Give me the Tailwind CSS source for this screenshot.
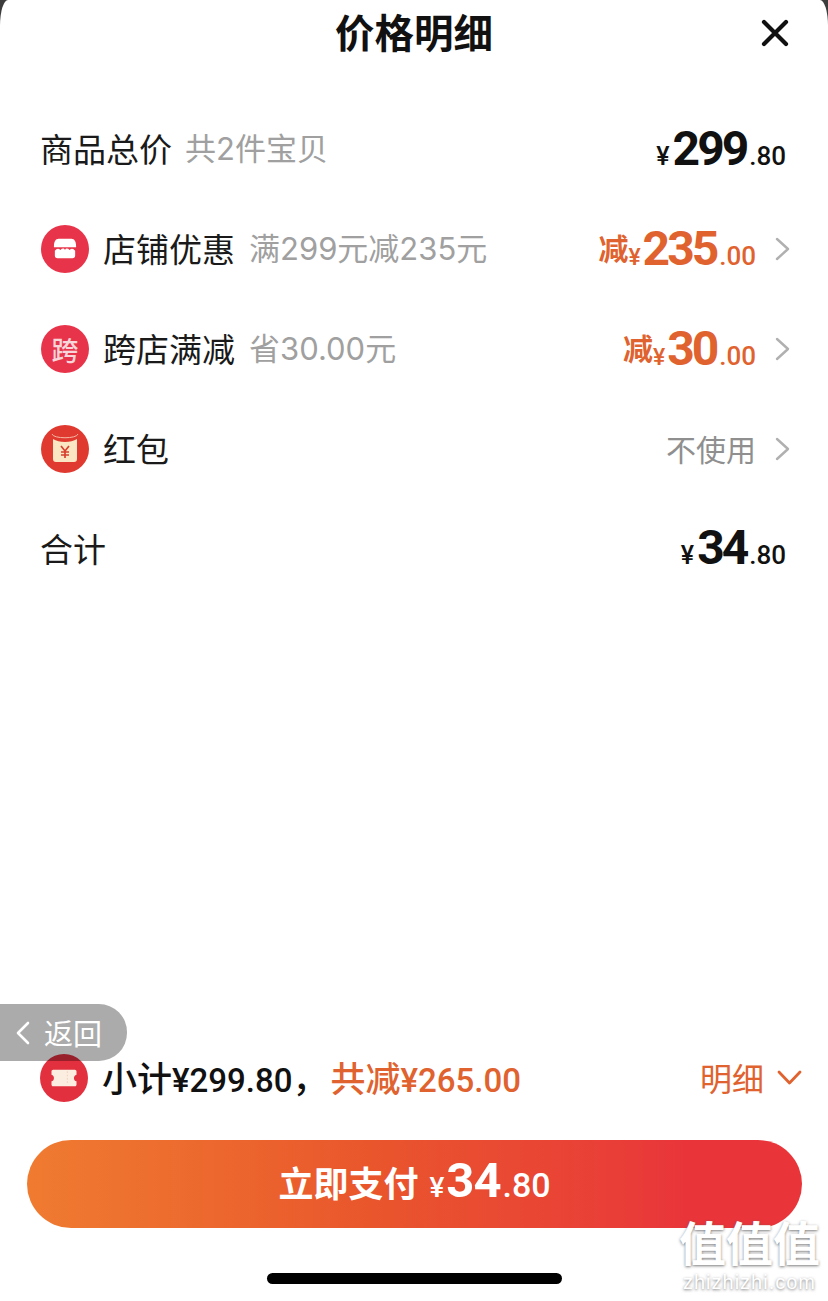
<!DOCTYPE html>
<html lang="zh-CN">
    <head>
        <meta charset="UTF-8" />
        <meta name="viewport" content="width=device-width, initial-scale=1.0" />
        <script src="https://cdn.jsdelivr.net/npm/@tailwindcss/browser@4"></script>
        <title>价格明细</title>
    </head>
    <body class="bg-[#3c3c3c] font-['Noto_Sans_CJK_SC','Noto_Sans',sans-serif] overflow-hidden">
        <div class="relative flex flex-col h-[1301px] bg-white rounded-tl-[8px_26px] rounded-tr-[8px_26px] overflow-hidden">
            <!-- Header -->
            <header class="relative flex justify-center items-center h-[68px] shrink-0">
                <h1 class="text-[39.5px] leading-none font-semibold text-[#111] pb-[6px]">价格明细</h1>
                <svg class="absolute left-[760px] top-[18px] w-[30px] h-[30px]" viewBox="0 0 30 30" fill="none" stroke="#111" stroke-width="4.2" stroke-linecap="round">
                    <path d="M4 4 L26 26 M26 4 L4 26" />
                </svg>
            </header>

            <!-- Price rows -->
            <main class="flex flex-col pt-[31px] flex-1">
                <div class="flex items-center justify-between h-[100px] pl-[40px] pr-[42px]">
                    <div class="flex items-center gap-[13px]">
                        <span class="text-[33px] leading-none text-[#1a1a1a] pb-[2px]">商品总价</span>
                        <span class="font-['Inter','Noto_Sans_CJK_SC',sans-serif] text-[31px] leading-none text-[#a0a0a0] pb-[2px]">共2件宝贝</span>
                    </div>
                    <div class="flex items-baseline mt-[3px] font-['Roboto',sans-serif] text-[#111]">
                        <span class="text-[25px] font-medium mr-[3px]">¥</span>
                        <span class="text-[48px] leading-none font-bold tracking-[-3px]">299</span>
                        <span class="text-[26px] font-medium ml-[3px]">.80</span>
                    </div>
                </div>

                <div class="flex items-center justify-between h-[100px] pl-[41px] pr-[38px]">
                    <div class="flex items-center gap-[14px]">
                        <span class="flex justify-center items-center w-[48px] h-[48px] rounded-full bg-[#e8344a] shrink-0">
                            <svg class="w-[24px] h-[24px]" viewBox="0 0 26 26" fill="#fff">
                                <path d="M6 2 H20 C23 2 25 5 25 10 V11 H1 V10 C1 5 3 2 6 2 Z" />
                                <path d="M2 15 C4 12 6 12 8 14 C10 12 12 12 13 14 C14 12 16 12 18 14 C20 12 22 12 24 15 V20 C24 22 23 23 21 23 H5 C3 23 2 22 2 20 Z" />
                            </svg>
                        </span>
                        <span class="text-[33px] leading-none text-[#1a1a1a] pb-[2px]">店铺优惠</span>
                        <span class="font-['Inter','Noto_Sans_CJK_SC',sans-serif] text-[31px] leading-none text-[#a0a0a0] pb-[2px]">满299元减235元</span>
                    </div>
                    <div class="flex items-center gap-[19px]">
                        <div class="flex items-baseline mt-[2px] font-['Roboto',sans-serif] text-[#e0622f]">
                            <span class="font-['Noto_Sans_CJK_SC',sans-serif] text-[30px] font-semibold -translate-y-[5px]">减</span>
                            <span class="text-[23px] font-medium mr-[2px]">¥</span>
                            <span class="text-[48px] leading-none font-bold tracking-[-3px]">235</span>
                            <span class="text-[26px] font-medium ml-[3px]">.00</span>
                        </div>
                        <svg class="w-[15px] h-[26px]" viewBox="0 0 15 26" fill="none" stroke="#b0b0b0" stroke-width="2.4" stroke-linecap="round" stroke-linejoin="round">
                            <path d="M2 3 L13 13 L2 23" />
                        </svg>
                    </div>
                </div>

                <div class="flex items-center justify-between h-[100px] pl-[41px] pr-[38px]">
                    <div class="flex items-center gap-[14px]">
                        <span class="flex justify-center items-center w-[48px] h-[48px] rounded-full bg-[#e8344a] shrink-0 text-[27px] leading-none font-medium text-[#f8d5d8]">跨</span>
                        <span class="text-[33px] leading-none text-[#1a1a1a] pb-[2px]">跨店满减</span>
                        <span class="font-['Inter','Noto_Sans_CJK_SC',sans-serif] text-[31px] leading-none text-[#a0a0a0] pb-[2px]">省30.00元</span>
                    </div>
                    <div class="flex items-center gap-[19px]">
                        <div class="flex items-baseline mt-[2px] font-['Roboto',sans-serif] text-[#e0622f]">
                            <span class="font-['Noto_Sans_CJK_SC',sans-serif] text-[30px] font-semibold -translate-y-[5px]">减</span>
                            <span class="text-[23px] font-medium mr-[2px]">¥</span>
                            <span class="text-[48px] leading-none font-bold tracking-[-3px]">30</span>
                            <span class="text-[26px] font-medium ml-[3px]">.00</span>
                        </div>
                        <svg class="w-[15px] h-[26px]" viewBox="0 0 15 26" fill="none" stroke="#b0b0b0" stroke-width="2.4" stroke-linecap="round" stroke-linejoin="round">
                            <path d="M2 3 L13 13 L2 23" />
                        </svg>
                    </div>
                </div>

                <div class="flex items-center justify-between h-[100px] pl-[41px] pr-[38px]">
                    <div class="flex items-center gap-[14px]">
                        <span class="flex justify-center items-center w-[48px] h-[48px] rounded-full bg-[#e0392f] shrink-0">
                            <svg class="w-[48px] h-[48px]" viewBox="0 0 48 48">
                                <path d="M12 14 C18 18 30 18 36 14 V34 C36 36 35 37 33 37 H15 C13 37 12 36 12 34 Z" fill="#fbe6c4" />
                                <path d="M11 9 C12 14 36 14 37 9" fill="none" stroke="#f6b9a4" stroke-width="1" />
                                <path d="M20 21 L24 26 L28 21 M24 26 V33 M20 27 H28 M20 30 H28" fill="none" stroke="#d8402f" stroke-width="1.7" />
                            </svg>
                        </span>
                        <span class="text-[33px] leading-none text-[#1a1a1a] pb-[2px]">红包</span>
                    </div>
                    <div class="flex items-center gap-[19px]">
                        <span class="text-[30px] leading-none text-[#8f8f8f] pb-[2px]">不使用</span>
                        <svg class="w-[15px] h-[26px]" viewBox="0 0 15 26" fill="none" stroke="#b0b0b0" stroke-width="2.4" stroke-linecap="round" stroke-linejoin="round">
                            <path d="M2 3 L13 13 L2 23" />
                        </svg>
                    </div>
                </div>

                <div class="flex items-center justify-between h-[100px] pl-[40px] pr-[42px]">
                    <span class="text-[33px] leading-none text-[#1a1a1a] pb-[2px]">合计</span>
                    <div class="flex items-baseline font-['Roboto',sans-serif] text-[#111]">
                        <span class="text-[25px] font-medium mr-[3px]">¥</span>
                        <span class="text-[48px] leading-none font-bold tracking-[-3px]">34</span>
                        <span class="text-[26px] font-medium ml-[3px]">.80</span>
                    </div>
                </div>
            </main>

            <!-- Footer -->
            <footer class="flex flex-col shrink-0 pl-[27px] pr-[26px]">
                <div class="flex items-center justify-between h-[50px] pl-[13px]">
                    <div class="flex items-center gap-[14px]">
                        <span class="flex justify-center items-center w-[48px] h-[48px] rounded-full bg-[#e2303f] shrink-0">
                            <svg class="w-[28px] h-[20px]" viewBox="0 0 32 24">
                                <path d="M3 2 H29 C30 2 31 3 31 4 V8 C27 9 27 15 31 16 V20 C31 21 30 22 29 22 H3 C2 22 1 21 1 20 V16 C5 15 5 9 1 8 V4 C1 3 2 2 3 2 Z" fill="#fbeee0" />
                                <path d="M20 4 V20" stroke="#efd0c0" stroke-width="1.2" stroke-dasharray="2 2" />
                            </svg>
                        </span>
                        <div class="flex items-baseline text-[35px] leading-none font-medium">
                            <span class="text-[#111]">小计<span class="font-['Roboto',sans-serif] text-[33px]">¥299.80</span>，</span>
                            <span class="text-[#e0622f] ml-[3px]">共减<span class="font-['Roboto',sans-serif] text-[33px]">¥265.00</span></span>
                        </div>
                    </div>
                    <div class="flex items-center gap-[13px] text-[#e0622f]">
                        <span class="text-[32px] leading-none pb-[2px]">明细</span>
                        <svg class="w-[25px] h-[16px]" viewBox="0 0 25 16" fill="none" stroke="#e0622f" stroke-width="2.8" stroke-linecap="round" stroke-linejoin="round">
                            <path d="M2 2 L12.5 13 L23 2" />
                        </svg>
                    </div>
                </div>

                <button class="flex justify-center items-center w-full h-[88px] mt-[37px] rounded-full bg-gradient-to-r from-[#ef7b30] via-[#e9552c] via-45% to-[#e9353a] to-85% text-white">
                    <span class="flex items-baseline pb-[8px]">
                        <span class="text-[35px] leading-none font-semibold mr-[11px]">立即支付</span>
                        <span class="font-['Roboto',sans-serif] text-[28px] leading-none font-medium mr-[2px]">¥</span>
                        <span class="font-['Roboto',sans-serif] text-[49px] leading-none font-bold tracking-[-1px]">34</span>
                        <span class="font-['Roboto',sans-serif] text-[34px] leading-none font-medium ml-[2px]">.80</span>
                    </span>
                </button>

                <div class="w-[295px] h-[11px] mt-[45px] mb-[17px] mx-auto rounded-full bg-black"></div>
            </footer>

            <!-- Floating back pill -->
            <div class="absolute left-0 top-[1004px] flex items-center w-[127px] h-[57px] pl-[15px] gap-[14px] rounded-r-[28px] bg-black/[0.33] text-white">
                <svg class="w-[15px] h-[24px]" viewBox="0 0 15 24" fill="none" stroke="#fff" stroke-width="2.6" stroke-linecap="round" stroke-linejoin="round">
                    <path d="M13 2 L3 12 L13 22" />
                </svg>
                <span class="text-[29px] leading-none">返回</span>
            </div>

            <!-- Watermark -->
            <div class="absolute left-[678px] top-[1216px] flex flex-col items-center w-[143px] text-white [text-shadow:0_1px_3px_rgba(90,90,90,0.8)]">
                <span class="text-[47px] leading-[50px] font-bold">值值值</span>
                <span class="mt-[6px] font-['Liberation_Sans',sans-serif] text-[20px] leading-[20px] tracking-[1px]">zhizhizhi.com</span>
            </div>
        </div>
    </body>
</html>
